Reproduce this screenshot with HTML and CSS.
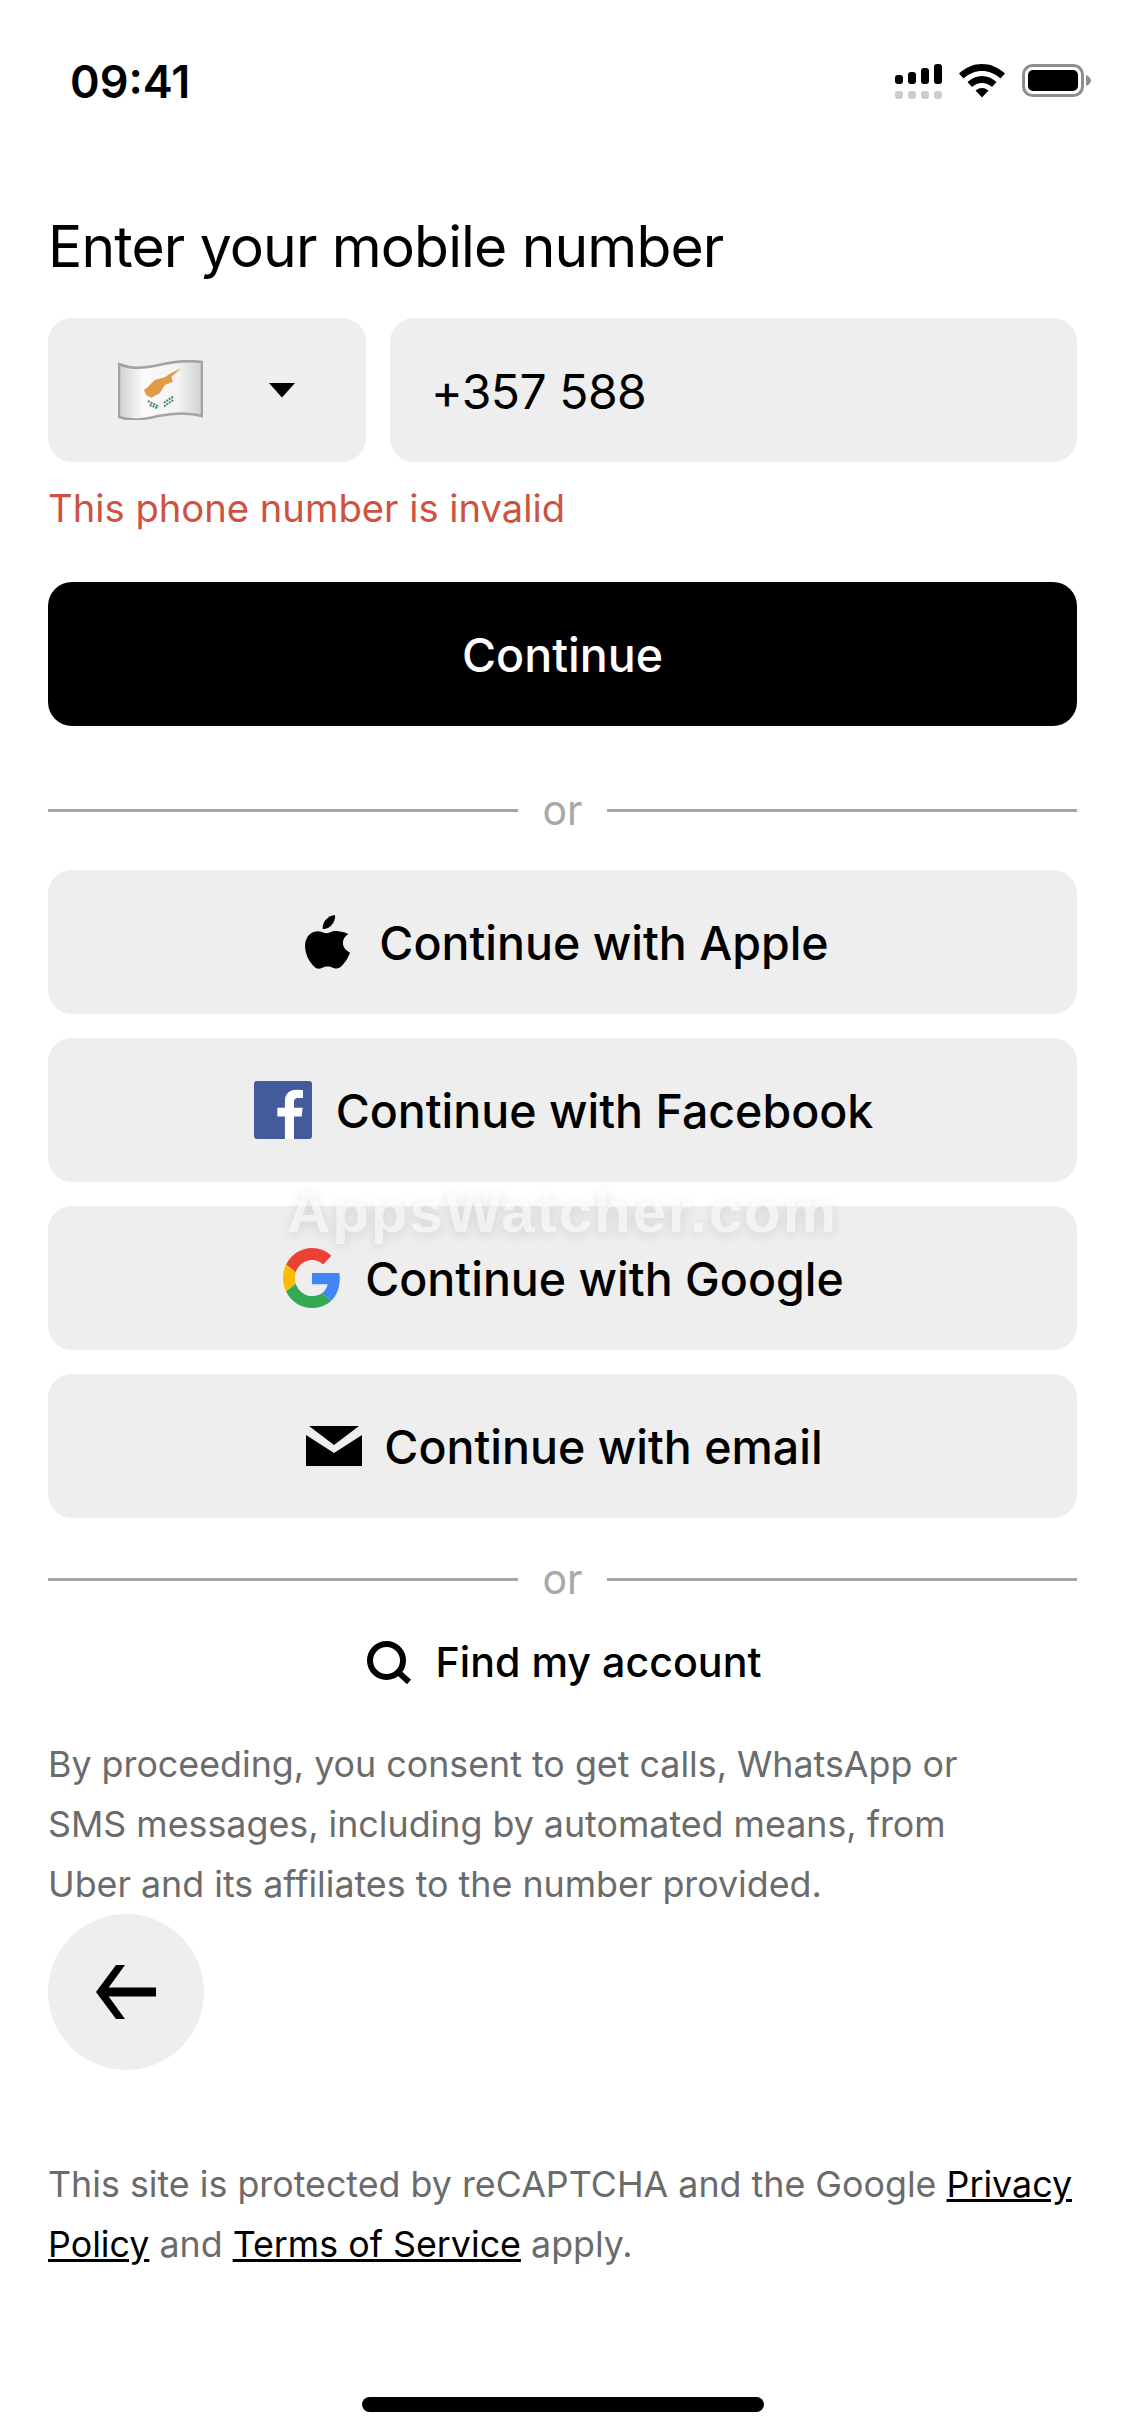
FILE: index.html
```html
<!DOCTYPE html>
<html lang="en">
<head>
  <meta charset="UTF-8" />
  <title>Enter your mobile number</title>
  <meta name="viewport" content="width=device-width, initial-scale=1">
  <link rel="stylesheet" href="styles.css">
</head>
<body>
  <div class="screen">
    <header class="status-bar">
      <span class="clock">09:41</span>
      <div class="status-icons">
        <svg class="signal" width="47" height="35" viewBox="0 0 47 35">
          <rect x="0" y="11" width="8" height="9" rx="3" fill="#000"/>
          <rect x="13" y="8" width="8" height="12" rx="3" fill="#000"/>
          <rect x="26" y="4" width="8" height="16" rx="3" fill="#000"/>
          <rect x="39" y="0" width="8" height="20" rx="3" fill="#000"/>
          <rect x="0" y="27" width="8" height="8" rx="3" fill="#ccc"/>
          <rect x="13" y="27" width="8" height="8" rx="3" fill="#ccc"/>
          <rect x="26" y="27" width="8" height="8" rx="3" fill="#ccc"/>
          <rect x="39" y="27" width="8" height="8" rx="3" fill="#ccc"/>
        </svg>
        <svg class="wifi" width="46" height="34" viewBox="0 0 46 34">
          <path d="M23 0C14.500 0 6.800 3.300 0 9.500L4.500 14.500C10 9.500 16.200 6.900 23 6.900S36 9.500 41.500 14.500L46 9.500C39.200 3.300 31.500 0 23 0Z" fill="#000"/>
          <path d="M23 12C17.700 12 12.900 14 8.500 18L13 23C16 20.400 19.300 19 23 19S30 20.400 33 23L37.500 18C33.100 14 28.300 12 23 12Z" fill="#000"/>
          <path d="M23 24C20.800 24 18.900 24.800 16.500 26.500L23 33.500L29.500 26.500C27.100 24.800 25.200 24 23 24Z" fill="#000"/>
        </svg>
        <svg class="battery" width="69" height="33" viewBox="0 0 69 33">
          <rect x="1.500" y="1.500" width="59" height="30" rx="9" fill="none" stroke="#8e8e8e" stroke-width="3"/>
          <rect x="6" y="6" width="50" height="21" rx="5" fill="#000"/>
          <path d="M64 11C67 12 69 14.500 69 16.500S67 21 64 22Z" fill="#8e8e8e"/>
        </svg>
      </div>
    </header>

    <main class="content">
      <h1 class="title">Enter your mobile number</h1>

      <div class="phone-row">
        <div class="country-select">
          <svg class="flag" width="85" height="60" viewBox="0 0 85 60">
            <defs>
              <linearGradient id="flagShade" x1="0" y1="0" x2="1" y2="0">
                <stop offset="0" stop-color="#d2d2d2"/>
                <stop offset="0.3" stop-color="#fbfbfb"/>
                <stop offset="0.72" stop-color="#f2f2f2"/>
                <stop offset="1" stop-color="#d0d0d0"/>
              </linearGradient>
            </defs>
            <path d="M1 4C10 8 22 9 36 6C52 2 70 0 84 2V56C70 52 55 53 40 56C25 60 10 60 1 57Z" fill="url(#flagShade)" stroke="#a3a3a3" stroke-width="2.500"/>
            <path d="M63.300 8.300L53.300 16.700L55 21.700L46.700 25L41.700 33.300L33.300 37.700L28.300 35L26 30L30 26.700L36.700 20L46.700 17.300L53.300 13Z" fill="#df9b45"/>
            <path d="M30 41L41 46.700M31.700 45L40 48.300" stroke="#4c8570" stroke-width="2" stroke-dasharray="2 1" fill="none"/>
            <path d="M55 36.700L45 43.300M55 40L45.700 46.700" stroke="#4c8570" stroke-width="2" stroke-dasharray="2 1" fill="none"/>
          </svg>
          <svg class="caret" width="26" height="15" viewBox="0 0 26 15">
            <path d="M0 0H26L13 14.500Z" fill="#000"/>
          </svg>
        </div>
        <div class="phone-input">+357 588</div>
      </div>
      <p class="error">This phone number is invalid</p>

      <button class="btn btn-primary">Continue</button>

      <div class="divider"><span>or</span></div>

      <div class="social-list">
        <button class="btn">
          <svg class="icon-apple" width="47" height="54" viewBox="3 0 44.700 53" preserveAspectRatio="none">
            <path d="M33.500 0C33.900 3.800 32.400 7.300 30.300 9.800C28.100 12.400 24.700 14.100 21.700 13.800C21.200 10.300 22.900 6.700 24.900 4.400C27.100 1.900 30.800 0.200 33.500 0Z" fill="#000"/>
            <path d="M46 18.700C43 20.600 41 23.600 41 27.300C41 31.700 43.700 35.200 47.700 36.700C46.600 40.100 45 43.300 42.900 46.200C40.900 49 38.500 52.500 35 52.600C31.700 52.700 30.500 50.600 26.600 50.600C22.700 50.600 21.400 52.500 18.200 52.700C14.800 52.800 12.100 49.100 10.100 46.300C5.900 40.300 2.700 29.400 7 22C9.100 18.300 12.900 16 17 15.900C20.200 15.900 23.200 18 25.200 18C27.100 18 30.700 15.500 34.600 15.800C36.200 15.900 42 16.500 46 18.700Z" fill="#000"/>
          </svg>
          <span>Continue with Apple</span>
        </button>
        <button class="btn">
          <svg class="icon-facebook" width="58" height="58" viewBox="0 0 58 58">
            <rect width="58" height="58" rx="3" fill="#435b9a"/>
            <path d="M40 58V35.500H47.600L48.700 26.800H40V21.200C40 18.700 40.700 17 44.300 17H49V9.200C48.200 9.100 45.400 8.800 42.200 8.800C35.500 8.800 30.900 12.900 30.900 20.400V26.800H23.300V35.500H30.900V58Z" fill="#fff"/>
          </svg>
          <span>Continue with Facebook</span>
        </button>
        <button class="btn">
          <svg class="icon-google" width="58" height="60" viewBox="0 0 48 48" preserveAspectRatio="none">
            <path fill="#ea4335" d="M24 9.500c3.540 0 6.710 1.220 9.210 3.600l6.850-6.850C35.900 2.380 30.470 0 24 0 14.620 0 6.510 5.380 2.560 13.220l7.980 6.190C12.430 13.720 17.740 9.500 24 9.500z"/>
            <path fill="#4285f4" d="M46.980 24.550c0-1.570-.15-3.090-.38-4.550H24v9.020h12.940c-.58 2.960-2.260 5.480-4.780 7.180l7.730 6c4.510-4.180 7.090-10.360 7.090-17.650z"/>
            <path fill="#fbbc05" d="M10.530 28.590c-.48-1.450-.76-2.990-.76-4.590s.27-3.140.76-4.590l-7.980-6.190C.92 16.460 0 20.120 0 24c0 3.880.92 7.540 2.560 10.780l7.970-6.190z"/>
            <path fill="#34a853" d="M24 48c6.480 0 11.930-2.130 15.890-5.810l-7.730-6c-2.150 1.450-4.920 2.300-8.160 2.300-6.260 0-11.570-4.220-13.470-9.910l-7.980 6.190C6.510 42.620 14.620 48 24 48z"/>
          </svg>
          <span>Continue with Google</span>
        </button>
        <button class="btn">
          <svg class="icon-email" width="56" height="40" viewBox="0 0 56 40">
            <path d="M3 0H53L28 19Z" fill="#000"/>
            <path d="M0 9L28 27L56 9V40H0Z" fill="#000"/>
          </svg>
          <span>Continue with email</span>
        </button>
      </div>

      <div class="divider divider-low"><span>or</span></div>

      <div class="find-account">
        <svg class="icon-search" width="44" height="43" viewBox="0 0 44 43">
          <circle cx="19.500" cy="19.500" r="16.500" fill="none" stroke="#000" stroke-width="6"/>
          <path d="M30 30L42 41" stroke="#000" stroke-width="6" fill="none"/>
        </svg>
        <span>Find my account</span>
      </div>

      <p class="legal consent">By proceeding, you consent to get calls, WhatsApp or SMS messages, including by automated means, from Uber and its affiliates to the number provided.</p>

      <button class="back-btn" aria-label="Back">
        <svg width="60" height="54" viewBox="0 0 60 54">
          <path d="M60 22.500H10V31.500H60Z" fill="#000"/>
          <path d="M20 0H29L9.500 27L29 54H20L0 27Z" fill="#000"/>
        </svg>
      </button>

      <p class="legal recaptcha">This site is protected by reCAPTCHA and the Google <a href="#">Privacy</a> <a href="#">Policy</a> and <a href="#">Terms of Service</a> apply.</p>
    </main>

    <div class="home-indicator"></div>
    <div class="watermark">AppsWatcher.com</div>
  </div>
</body>
</html>
```

FILE: styles.css
```css
/* Reset */
* {
  margin: 0;
  padding: 0;
  box-sizing: border-box;
}

body {
  font-family: Inter, "Liberation Sans", sans-serif;
  background: #fff;
  color: #000;
}

.screen {
  position: relative;
  width: 1125px;
  height: 2436px;
  overflow: hidden;
  display: flex;
  flex-direction: column;
}

/* Status bar */
.status-bar {
  height: 207px;
  padding: 57px 34px 0 70px;
  display: flex;
  justify-content: space-between;
  align-items: flex-start;
}

.clock {
  font-size: 45px;
  line-height: 50px;
  font-weight: 600;
}

.status-icons {
  display: flex;
  align-items: flex-start;
  gap: 17px;
  padding-top: 7px;
}

/* Main column */
.content {
  flex: 1;
  padding: 0 48px;
  display: flex;
  flex-direction: column;
}

.title {
  font-size: 57px;
  letter-spacing: -0.85px;
  line-height: 80px;
  font-weight: 400;
  margin-bottom: 31px;
}

.phone-row {
  display: flex;
  gap: 24px;
}

.country-select {
  width: 318px;
  height: 144px;
  border-radius: 24px;
  background: #eee;
  display: flex;
  align-items: center;
  padding-left: 70px;
  gap: 66px;
}

.phone-input {
  flex: 1;
  height: 144px;
  border-radius: 24px;
  background: #eee;
  display: flex;
  align-items: center;
  padding: 2px 0 0 41px;
  font-size: 48px;
  letter-spacing: -0.5px;
}

.error {
  color: #cd5340;
  font-size: 38.2px;
  line-height: 60px;
  margin-top: 16px;
  margin-bottom: 44px;
}

/* Buttons */
.btn {
  width: 100%;
  height: 144px;
  border: none;
  border-radius: 24px;
  background: #eee;
  color: #000;
  font-family: inherit;
  font-size: 46.5px;
  font-weight: 500;
  display: flex;
  align-items: center;
  justify-content: center;
}

.btn span,
.btn-primary {
  padding-top: 2px;
}

.btn-primary {
  background: #000;
  color: #fff;
}

.icon-apple {
  margin: 0 29px 0 7px;
}

.icon-facebook,
.icon-google {
  margin: 0 24px 0 2px;
}

.icon-email {
  margin: 0 22px 0 4px;
}

.social-list {
  display: flex;
  flex-direction: column;
  gap: 24px;
}

.divider {
  height: 144px;
  padding-top: 24px;
  display: flex;
  align-items: center;
  gap: 24px;
  color: #a8a8a8;
  font-size: 41px;
}

.divider::before,
.divider::after {
  content: "";
  flex: 1;
  height: 3px;
  background: #a5a5a5;
}

.divider-low {
  height: 122px;
  padding-top: 0;
}

.find-account {
  height: 44px;
  display: flex;
  align-items: center;
  justify-content: center;
  gap: 25px;
  font-size: 41.2px;
  font-weight: 500;
  margin-bottom: 50px;
}

.icon-search {
  margin-left: 3px;
}

.legal {
  color: #6b6b6b;
  font-size: 35.8px;
  line-height: 60px;
}

.consent {
  padding-right: 80px;
}

.back-btn {
  width: 156px;
  height: 156px;
  border: none;
  border-radius: 50%;
  background: #eee;
  display: flex;
  align-items: center;
  justify-content: center;
}

.recaptcha {
  margin-top: 84px;
}

.recaptcha a {
  color: #000;
  text-decoration: underline;
}

/* Bits that sit over the page */
.home-indicator {
  position: absolute;
  left: 362px;
  top: 2397px;
  width: 402px;
  height: 15px;
  border-radius: 8px;
  background: #000;
}

.watermark {
  position: absolute;
  left: 0;
  right: 0;
  top: 1177px;
  text-align: center;
  font-family: "Liberation Sans", sans-serif;
  font-size: 60px;
  letter-spacing: 2px;
  line-height: 70px;
  font-weight: 700;
  color: rgba(255, 255, 255, 0.6);
  text-shadow: 0 3px 12px rgba(0, 0, 0, 0.12);
}
```
